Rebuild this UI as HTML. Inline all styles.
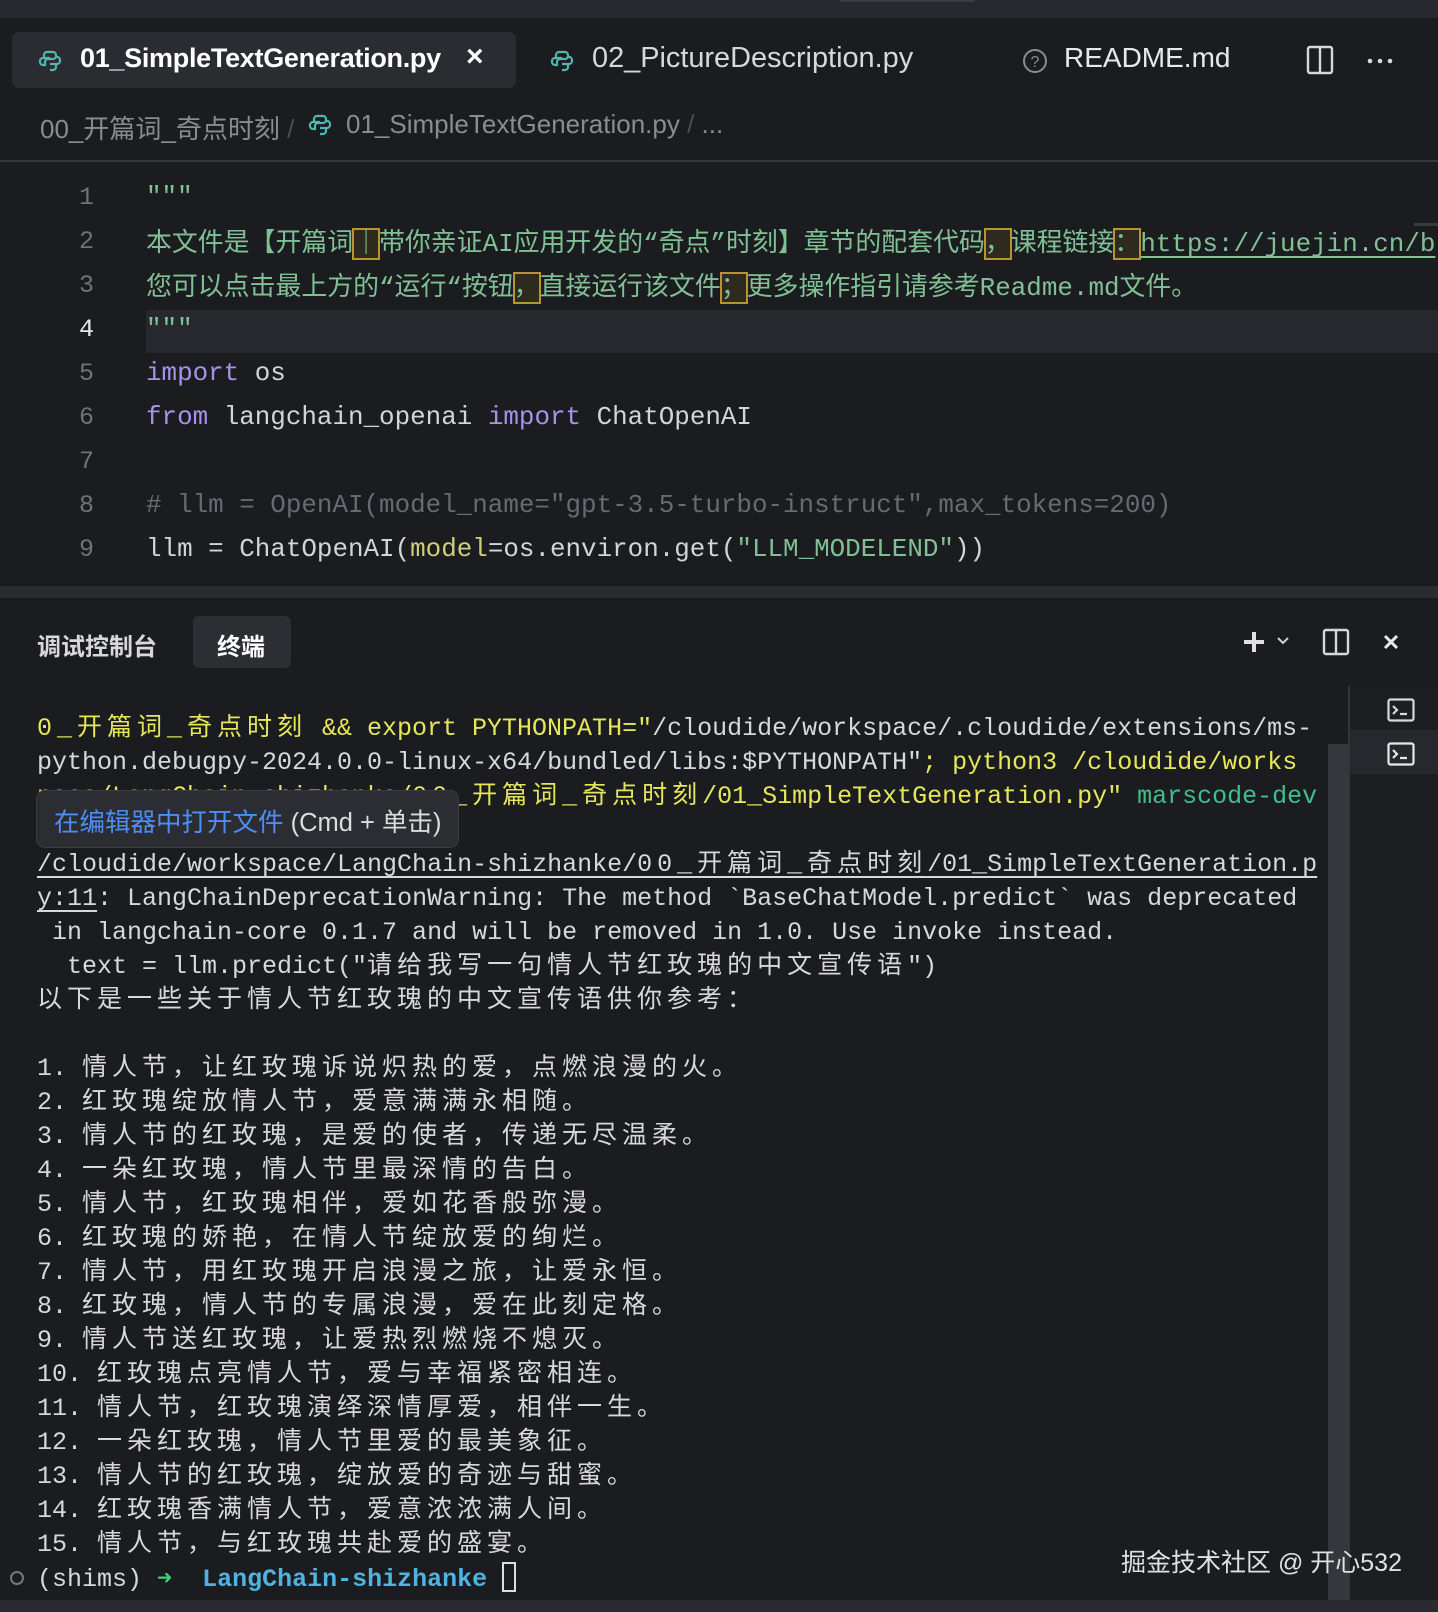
<!DOCTYPE html>
<html><head><meta charset="utf-8"><style>
*{margin:0;padding:0;box-sizing:border-box}
body{width:1438px;height:1612px;background:#1b1c20;position:relative;overflow:hidden;font-family:"Liberation Sans","Noto Sans CJK SC",sans-serif;color:#d4d4d4}
.a{position:absolute;white-space:pre}
.mono{font-family:"Liberation Mono","Noto Sans CJK SC",monospace}
.ed{font-size:25.9px;color:#d4d4d4}
.ln{position:absolute;left:40px;width:54px;text-align:right;font-size:25px;color:#6f7278;font-family:"Liberation Mono",monospace}
.g{color:#80c094}.k{color:#a792e8}.cm{color:#676a71}.p{color:#cfcf7a}
.bx{outline:2px solid #b8962e;outline-offset:-1px;background:#2e2a1e}
.term{font-size:25px;line-height:34px;color:#d8d8d8}
.c{letter-spacing:5px}
.y{color:#e6e65a}.t{color:#3fbf8a}
.u{text-decoration:underline;text-underline-offset:5px}
</style></head><body>
<div class="a" style="left:0;top:0;width:1438px;height:18px;background:#28292e"></div>
<div class="a" style="left:840px;top:0;width:134px;height:2px;background:#3c3d43"></div>
<!-- tabs -->
<div class="a" style="left:12px;top:32px;width:504px;height:56px;background:#2a2c32;border-radius:7px"></div>
<svg class="a" style="left:38px;top:49px" width="24" height="24" viewBox="0 0 24 24" fill="none" stroke="#4fb6b0" stroke-width="2.2"><path d="M12 3h-3a3 3 0 0 0-3 3v3h6M6 9H5a3 3 0 0 0-3 3v1a3 3 0 0 0 3 3h2v-3a3 3 0 0 1 3-3h5a3 3 0 0 0 3-3V6a3 3 0 0 0-3-3h-3"/><path d="M12 21h3a3 3 0 0 0 3-3v-3h-6M18 15h1a3 3 0 0 0 3-3v-1a3 3 0 0 0-3-3h-1"/></svg>
<div class="a" style="left:80px;top:43px;font-size:27px;font-weight:bold;color:#fff;letter-spacing:-0.3px">01_SimpleTextGeneration.py</div>
<div class="a" style="left:466px;top:40px;font-size:30px;font-weight:bold;color:#fff">×</div>
<svg class="a" style="left:550px;top:49px" width="24" height="24" viewBox="0 0 24 24" fill="none" stroke="#4fb6b0" stroke-width="2.2"><path d="M12 3h-3a3 3 0 0 0-3 3v3h6M6 9H5a3 3 0 0 0-3 3v1a3 3 0 0 0 3 3h2v-3a3 3 0 0 1 3-3h5a3 3 0 0 0 3-3V6a3 3 0 0 0-3-3h-3"/><path d="M12 21h3a3 3 0 0 0 3-3v-3h-6M18 15h1a3 3 0 0 0 3-3v-1a3 3 0 0 0-3-3h-1"/></svg>
<div class="a" style="left:592px;top:42px;font-size:28.9px;color:#d8d8d8">02_PictureDescription.py</div>
<svg class="a" style="left:1022px;top:48px" width="26" height="26" viewBox="0 0 26 26"><circle cx="13" cy="13" r="11" fill="none" stroke="#8a8c92" stroke-width="2"/><text x="13" y="19" font-size="16" text-anchor="middle" fill="#8a8c92" font-family="Liberation Sans">?</text></svg>
<div class="a" style="left:1064px;top:42px;font-size:28px;color:#e8e8e8">README.md</div>
<svg class="a" style="left:1306px;top:45px" width="28" height="30" viewBox="0 0 28 30" fill="none" stroke="#d8d8d8" stroke-width="2.4"><rect x="2" y="2" width="24" height="26" rx="2"/><path d="M14 2v26"/></svg>
<svg class="a" style="left:1366px;top:57px" width="28" height="8" viewBox="0 0 28 8" fill="#d8d8d8"><circle cx="4" cy="4" r="2.3"/><circle cx="14" cy="4" r="2.3"/><circle cx="24" cy="4" r="2.3"/></svg>
<!-- breadcrumb -->
<div class="a" style="left:40px;top:109px;font-size:26px;color:#8a8c91">00_开篇词_奇点时刻 <span style="color:#4a4c52">/</span></div>
<svg class="a" style="left:308px;top:113px" width="24" height="24" viewBox="0 0 24 24" fill="none" stroke="#4fb6b0" stroke-width="2.2"><path d="M12 3h-3a3 3 0 0 0-3 3v3h6M6 9H5a3 3 0 0 0-3 3v1a3 3 0 0 0 3 3h2v-3a3 3 0 0 1 3-3h5a3 3 0 0 0 3-3V6a3 3 0 0 0-3-3h-3"/><path d="M12 21h3a3 3 0 0 0 3-3v-3h-6M18 15h1a3 3 0 0 0 3-3v-1a3 3 0 0 0-3-3h-1"/></svg>
<div class="a" style="left:346px;top:109px;font-size:26px;color:#8a8c91">01_SimpleTextGeneration.py <span style="color:#4a4c52">/</span> ...</div>
<div class="a" style="left:0;top:160px;width:1438px;height:2px;background:#36373c"></div>
<!-- editor -->
<div class="a" style="left:146px;top:310px;width:1292px;height:43px;background:#27282d"></div>
<div class="a" style="left:1414px;top:223px;width:24px;height:3px;background:#3a3b40"></div>
<div class="ln" style="top:183px">1</div>
<div class="ln" style="top:227px">2</div>
<div class="ln" style="top:271px">3</div>
<div class="ln" style="top:315px;color:#e8e8e8">4</div>
<div class="ln" style="top:359px">5</div>
<div class="ln" style="top:403px">6</div>
<div class="ln" style="top:447px">7</div>
<div class="ln" style="top:491px">8</div>
<div class="ln" style="top:535px">9</div>
<div class="a mono ed g" style="left:146px;top:182px">"""</div>
<div class="a mono ed g" style="left:146px;top:222px">本文件是【开篇词<span class="bx">｜</span>带你亲证AI应用开发的“奇点”时刻】章节的配套代码<span class="bx">，</span>课程链接<span class="bx">：</span><span style="text-decoration:underline;text-underline-offset:5px">https://juejin.cn/b</span></div>
<div class="a mono ed g" style="left:146px;top:266px">您可以点击最上方的“运行“按钮<span class="bx">，</span>直接运行该文件<span class="bx">；</span>更多操作指引请参考Readme.md文件。</div>
<div class="a mono ed g" style="left:146px;top:314px">"""</div>
<div class="a mono ed" style="left:146px;top:358px"><span class="k">import</span> os</div>
<div class="a mono ed" style="left:146px;top:402px"><span class="k">from</span> langchain_openai <span class="k">import</span> ChatOpenAI</div>
<div class="a mono ed cm" style="left:146px;top:490px"># llm = OpenAI(model_name="gpt-3.5-turbo-instruct",max_tokens=200)</div>
<div class="a mono ed" style="left:146px;top:534px">llm = ChatOpenAI(<span class="p">model</span>=os.environ.get(<span class="g">"LLM_MODELEND"</span>))</div>
<!-- divider -->
<div class="a" style="left:0;top:586px;width:1438px;height:12px;background:#2a2b30"></div>
<!-- panel header -->
<div class="a" style="left:37px;top:627px;font-size:24px;font-weight:bold;color:#d8d8d8">调试控制台</div>
<div class="a" style="left:193px;top:616px;width:98px;height:52px;background:#2c2e34;border-radius:6px"></div>
<div class="a" style="left:217px;top:627px;font-size:24px;font-weight:bold;color:#fff">终端</div>
<svg class="a" style="left:1242px;top:630px" width="24" height="24" viewBox="0 0 24 24" stroke="#e0e0e0" stroke-width="4"><path d="M12 2v20M2 12h20"/></svg>
<svg class="a" style="left:1276px;top:636px" width="14" height="10" viewBox="0 0 14 10" fill="none" stroke="#d0d0d0" stroke-width="2"><path d="M2 2l5 5 5-5"/></svg>
<svg class="a" style="left:1322px;top:628px" width="28" height="28" viewBox="0 0 28 28" fill="none" stroke="#d8d8d8" stroke-width="2.4"><rect x="2" y="2" width="24" height="24" rx="2"/><path d="M14 2v24"/></svg>
<svg class="a" style="left:1383px;top:634px" width="16" height="16" viewBox="0 0 16 16" stroke="#e8e8e8" stroke-width="3"><path d="M2 2l12 12M14 2L2 14"/></svg>
<!-- right side -->
<div class="a" style="left:1350px;top:686px;width:88px;height:926px;background:#1d1e22"></div>
<div class="a" style="left:1348px;top:686px;width:2px;height:914px;background:#34353a"></div>
<div class="a" style="left:1328px;top:744px;width:20px;height:856px;background:#36373c"></div>
<div class="a" style="left:1350px;top:730px;width:88px;height:44px;background:#27282d"></div>
<svg class="a" style="left:1387px;top:698px" width="28" height="24" viewBox="0 0 28 24" fill="none" stroke="#d8d8d8" stroke-width="2.2"><rect x="1.5" y="1.5" width="25" height="21" rx="2"/><path d="M6 8l4 4-4 4M13 16h7"/></svg>
<svg class="a" style="left:1387px;top:742px" width="28" height="24" viewBox="0 0 28 24" fill="none" stroke="#e8e8e8" stroke-width="2.2"><rect x="1.5" y="1.5" width="25" height="21" rx="2"/><path d="M6 8l4 4-4 4M13 16h7"/></svg>
<!-- terminal -->
<div class="a mono term" style="left:37px;top:712px"><span class="y"><span class="c">0_开篇词_奇点时刻</span> &amp;&amp; export PYTHONPATH="</span>/cloudide/workspace/.cloudide/extensions/ms-
python.debugpy-2024.0.0-linux-x64/bundled/libs:$PYTHONPATH"<span class="y">; python3 /cloudide/works</span>
<span class="y">pace/LangChain-shizhanke/<span class="c">00_开篇词_奇点时刻</span>/01_SimpleTextGeneration.py"</span><span class="t"> marscode-dev</span>

<span class="u">/cloudide/workspace/LangChain-shizhanke/<span class="c">00_开篇词_奇点时刻</span>/01_SimpleTextGeneration.p</span>
<span class="u">y:11</span>: LangChainDeprecationWarning: The method `BaseChatModel.predict` was deprecated
 in langchain-core 0.1.7 and will be removed in 1.0. Use invoke instead.
  text = llm.predict("<span class="c">请给我写一句情人节红玫瑰的中文宣传语</span>")
<span class="c">以下是一些关于情人节红玫瑰的中文宣传语供你参考：</span>

1. <span class="c">情人节，让红玫瑰诉说炽热的爱，点燃浪漫的火。</span>
2. <span class="c">红玫瑰绽放情人节，爱意满满永相随。</span>
3. <span class="c">情人节的红玫瑰，是爱的使者，传递无尽温柔。</span>
4. <span class="c">一朵红玫瑰，情人节里最深情的告白。</span>
5. <span class="c">情人节，红玫瑰相伴，爱如花香般弥漫。</span>
6. <span class="c">红玫瑰的娇艳，在情人节绽放爱的绚烂。</span>
7. <span class="c">情人节，用红玫瑰开启浪漫之旅，让爱永恒。</span>
8. <span class="c">红玫瑰，情人节的专属浪漫，爱在此刻定格。</span>
9. <span class="c">情人节送红玫瑰，让爱热烈燃烧不熄灭。</span>
10. <span class="c">红玫瑰点亮情人节，爱与幸福紧密相连。</span>
11. <span class="c">情人节，红玫瑰演绎深情厚爱，相伴一生。</span>
12. <span class="c">一朵红玫瑰，情人节里爱的最美象征。</span>
13. <span class="c">情人节的红玫瑰，绽放爱的奇迹与甜蜜。</span>
14. <span class="c">红玫瑰香满情人节，爱意浓浓满人间。</span>
15. <span class="c">情人节，与红玫瑰共赴爱的盛宴。</span>
(shims) <span style="color:#3fd07a">➜</span>  <b style="color:#4fb3e0">LangChain-shizhanke</b> <span style="display:inline-block;width:14px;height:30px;border:2px solid #ddd;vertical-align:-6px"></span></div>
<div class="a" style="left:10px;top:1571px;width:14px;height:14px;border:2px solid #777;border-radius:50%"></div>
<!-- tooltip -->
<div class="a" style="left:36px;top:790px;width:423px;height:58px;background:#2b2d33;border:1px solid #3a3c42;border-radius:9px"></div>
<div class="a" style="left:54px;top:802px;font-size:25.5px;color:#dcdcdc"><span style="color:#4d8ef5">在编辑器中打开文件</span> (Cmd + 单击)</div>
<!-- watermark -->
<div class="a" style="left:1121px;top:1543px;font-size:25px;color:#e0e0e0">掘金技术社区 @ 开心532</div>
<div class="a" style="left:0;top:1600px;width:1438px;height:12px;background:#2a2b30"></div>
</body></html>
